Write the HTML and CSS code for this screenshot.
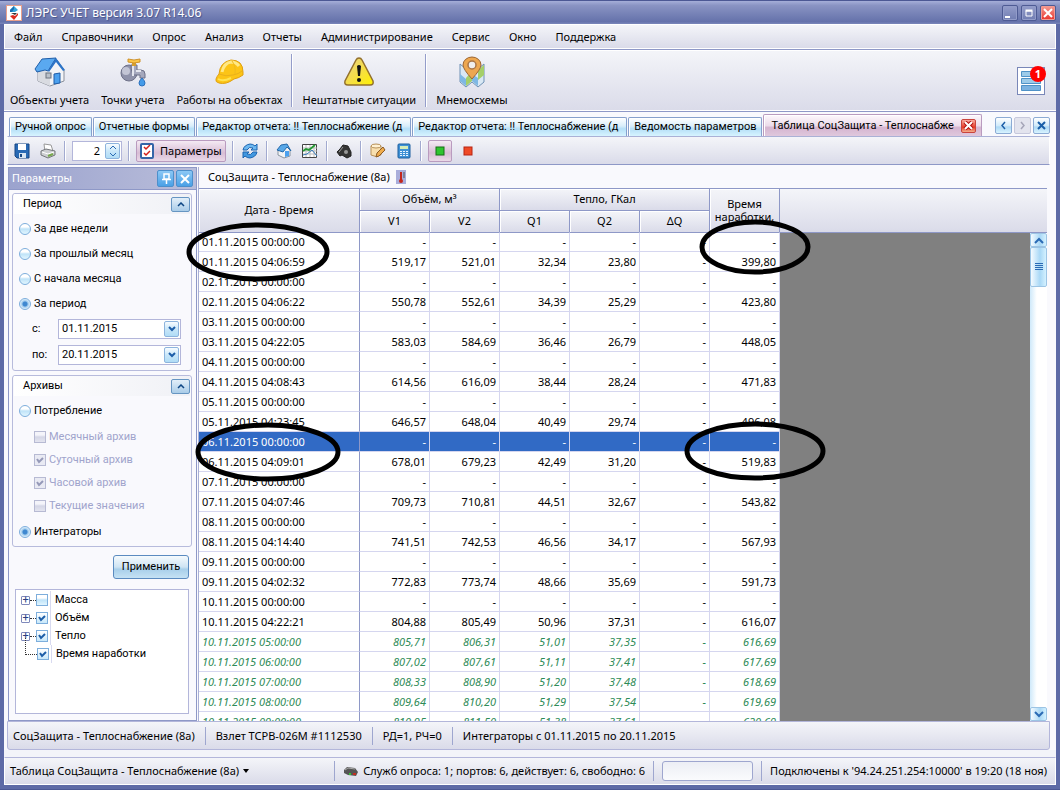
FILE: index.html
```html
<!DOCTYPE html>
<html lang="ru">
<head>
  <meta charset="utf-8">
  <title>ЛЭРС УЧЕТ</title>
  <link rel="stylesheet" href="styles.css">
</head>
<body>
<div class="window">

  <header class="titlebar">
    <svg class="app-icon" width="16" height="16" viewBox="0 0 16 16">
      <rect x="0.5" y="0.5" width="15" height="15" fill="#fff" stroke="#e8a08c"/>
      <path d="M8 1l4 4-3 2H4V5z" fill="#35a5dc"/>
      <path d="M8 1L4 5v2h2l2-3z" fill="#1b6fb0"/>
      <path d="M8 15l-4-4 3-1 2 1 3-3v2z" fill="#dd2a1c"/>
      <path d="M5 8h6l-2 2z" fill="#333"/>
    </svg>
    <h1>ЛЭРС УЧЕТ версия 3.07 R14.06</h1>
    <div class="window-buttons">
      <button class="win-btn" aria-label="Свернуть"><svg width="14" height="14"><path d="M2 11h5" stroke="#fff" stroke-width="2"/></svg></button>
      <button class="win-btn" aria-label="Развернуть"><svg width="14" height="14"><path d="M4 5h6v5H4z" fill="none" stroke="#fff"/><path d="M3.500 4.500h7" stroke="#fff" stroke-width="2"/></svg></button>
      <button class="win-btn win-close" aria-label="Закрыть"><svg width="14" height="14"><path d="M3 3l8 8M11 3l-8 8" stroke="#fff" stroke-width="2"/></svg></button>
    </div>
  </header>

  <nav class="menu">
    <a href="#">Файл</a>
    <a href="#">Справочники</a>
    <a href="#">Опрос</a>
    <a href="#">Анализ</a>
    <a href="#">Отчеты</a>
    <a href="#">Администрирование</a>
    <a href="#">Сервис</a>
    <a href="#">Окно</a>
    <a href="#">Поддержка</a>
  </nav>

  <div class="main-toolbar">
    <button class="big-btn">
      <svg width="32" height="32" viewBox="0 0 32 32">
        <path d="M4 14v11l12 5 14-5V14l-7-10-8 8z" fill="#f3f4f7" stroke="#8a8f9a"/>
        <path d="M4 14v11l12 5V16z" fill="#d9dbe1"/>
        <path d="M1 13L8 3l14-1-8 13-3-1-8 2z" fill="#5aa9f0" stroke="#1f5da8"/>
        <path d="M22 2l9 12-2 1-7-9-7 10-1-1z" fill="#2c74c8"/>
        <rect x="12" y="17" width="5" height="5" fill="#b9c0c9" stroke="#6d7480"/>
        <path d="M20 18l6-1v10l-6 1z" fill="#4ba0ee" stroke="#1f5da8"/>
      </svg>
      <span>Объекты учета</span>
    </button>
    <button class="big-btn">
      <svg width="32" height="32" viewBox="0 0 32 32">
        <circle cx="12" cy="17" r="8" fill="#8f92aa" stroke="#6d7088"/>
        <circle cx="9" cy="15" r="4" fill="#c3c5d5"/>
        <path d="M14 9h6v5h4q4 0 4 4v4h-5v-3h-6q-3-2-3-10z" fill="#a5a8bd" stroke="#6d7088"/>
        <path d="M16 10v10M19 15h5" stroke="#e4e5ee" stroke-width="2"/>
        <rect x="15" y="5" width="4" height="5" fill="#d59e2f"/>
        <path d="M11 3q6 2 12 0v3q-6 2-12 0z" fill="#fbc648" stroke="#cf922a"/>
        <path d="M25 22q3 3 3 5a3 3 0 0 1-6 0q0-2 3-5z" fill="#449be9" stroke="#2b70bd"/>
      </svg>
      <span>Точки учета</span>
    </button>
    <button class="big-btn">
      <svg width="32" height="32" viewBox="0 0 32 32">
        <path d="M2 23q1-3 3-5Q6 6 17 4q12 0 12 12v3q-4 3-9 4-8 6-15 4-4-1-3-4z" fill="#fcc416" stroke="#e0a012"/>
        <path d="M8 16Q10 7 17 6q5 0 8 4" fill="none" stroke="#ffe886" stroke-width="3"/>
        <path d="M5 18q7 3 14 1 6-1 9-4" fill="none" stroke="#eab01a"/>
        <path d="M4 23q5 3 13-1" fill="none" stroke="#ffe352" stroke-width="2"/>
        <path d="M18 5q4 5 3 13" fill="none" stroke="#f0ba1c"/>
      </svg>
      <span>Работы на объектах</span>
    </button>
    <span class="big-sep"></span>
    <button class="big-btn">
      <svg width="32" height="32" viewBox="0 0 32 32">
        <defs><linearGradient id="warn" x1="0" y1="0" x2="1" y2="1"><stop offset="0" stop-color="#e8d38b"/><stop offset="0.500" stop-color="#f5dd4a"/><stop offset="1" stop-color="#fff200"/></linearGradient></defs>
        <path d="M16 2q2 0 3 2l11 21q1 4-3 4H5q-4 0-3-4L13 4q1-2 3-2z" fill="url(#warn)" stroke="#93702c" stroke-width="1.500"/>
        <path d="M14 10q2-2 4 0l-1 10h-2z" fill="#111"/>
        <circle cx="16" cy="24" r="2" fill="#111"/>
      </svg>
      <span>Нештатные ситуации</span>
    </button>
    <span class="big-sep"></span>
    <button class="big-btn">
      <svg width="32" height="32" viewBox="0 0 32 32">
        <path d="M4 8l6 5 6-5 6 5 6-5v18l-6 5-6-5-6 5-6-5z" fill="#d9e8f4" stroke="#6e91b5"/>
        <path d="M4 18l6 5v7l-6-5zM16 18l6 4v8l-6-5z" fill="#7eb8e4"/>
        <path d="M10 22l6-7v10l-6 5zM22 14l6-5v10l-6 5z" fill="#a5cf69"/>
        <path d="M16 23Q7 13 7 9a9 8 0 0 1 18 0q0 4-9 14z" fill="#eda750" stroke="#9c6633"/>
        <circle cx="16" cy="9" r="4" fill="#f0eeec" stroke="#aa7545" stroke-width="1.500"/>
      </svg>
      <span>Мнемосхемы</span>
    </button>
    <button class="notify" aria-label="Уведомления">
      <svg width="20" height="20"><g fill="#9ccbe9" stroke="#4f92c7"><path d="M.5.500h19v5H.500z"/><path d="M.5 7.500h19v5H.500z"/><path d="M.5 14.500h19v5H.500z" fill="#7bb2e0"/></g></svg>
      <span class="badge">1</span>
    </button>
  </div>

  <div class="tabs">
    <button class="tab">Ручной опрос</button>
    <button class="tab">Отчетные формы</button>
    <button class="tab tab-long">Редактор отчета: !! Теплоснабжение (д</button>
    <button class="tab tab-long">Редактор отчета: !! Теплоснабжение (д</button>
    <button class="tab">Ведомость параметров</button>
    <div class="tab tab-active">
      <span>Таблица СоцЗащита - Теплоснабже</span>
      <button class="tab-close" aria-label="Закрыть вкладку"><svg width="11" height="9"><path d="M2 1l7 7M9 1L2 8" stroke="#b01010" stroke-width="4"/><path d="M2 1l7 7M9 1L2 8" stroke="#fff" stroke-width="2"/></svg></button>
    </div>
    <div class="tab-nav">
      <button class="nav-btn" aria-label="Назад"><svg width="9" height="9"><path d="M6 1L3 4.500 6 8" fill="none" stroke="#1a5ea8" stroke-width="1.500"/></svg></button>
      <button class="nav-btn" disabled aria-label="Вперед"><svg width="9" height="9"><path d="M3 1l3 3.500L3 8" fill="none" stroke="#a5a5b8" stroke-width="1.500"/></svg></button>
      <button class="nav-btn" aria-label="Закрыть"><svg width="9" height="9"><path d="M1 1l7 7M8 1L1 8" stroke="#1a5ea8" stroke-width="2"/></svg></button>
    </div>
  </div>

  <main class="page">
    <div class="tools">
      <button class="tool" aria-label="Сохранить"><svg width="16" height="16"><path d="M1 1h14v14H3l-2-2z" fill="#2869b4" stroke="#174784"/><path d="M4 1h8v6H4z" fill="#fff"/><path d="M5 10h7v5H5z" fill="#d8e5f2"/><path d="M6 11h2v3H6z" fill="#174784"/></svg></button>
      <button class="tool" aria-label="Печать"><svg width="16" height="16"><path d="M4 1l7 1 2 6-8 1z" fill="#fff" stroke="#999"/><path d="M1 8l5-2 9 2v4l-7 3-7-3z" fill="#ccced1" stroke="#74767b"/><path d="M2 9l6 2 6-2" fill="none" stroke="#fff"/><path d="M8 13l5-2" stroke="#77a84b" stroke-width="2"/></svg></button>
      <span class="sep"></span>
      <div class="spin">
        <input type="text" value="2" aria-label="Знаков после запятой">
        <button class="spin-btn" aria-label="Изменить"><svg width="8" height="12"><path d="M1 4l3-3 3 3M1 8l3 3 3-3" fill="none" stroke="#2a6cb4"/></svg></button>
      </div>
      <span class="sep"></span>
      <button class="tool tool-on tool-text"><svg width="14" height="16"><rect x="1" y="1" width="12" height="14" rx="1" fill="#fff" stroke="#3465a8" stroke-width="2"/><path d="M4 4l2 2 4-4M4 10l2 2 4-4" fill="none" stroke="#d3201b" stroke-width="1.500"/></svg><span>Параметры</span></button>
      <span class="sep"></span>
      <button class="tool" aria-label="Обновить"><svg width="16" height="16"><path d="M1 7q1-5 7-6 3 0 5 2l2-2v6H9l2-2Q7 3 5 7z" fill="#6cb8f0" stroke="#1c64b0"/><path d="M15 9q-1 5-7 6-3 0-5-2l-2 2V9h6l-2 2q4 2 6-2z" fill="#4298e0" stroke="#1c64b0"/></svg></button>
      <span class="sep"></span>
      <button class="tool" aria-label="Объект"><svg width="16" height="16"><path d="M2 7v5l6 3 6-2V7l-4-4z" fill="#f2f3f5" stroke="#8893a0"/><path d="M1 7l4-5 6-1 4 7-4-4-4 5z" fill="#58a8e8" stroke="#2569aa"/><path d="M9 8h4v5l-4 1z" fill="#4ba0ee"/></svg></button>
      <button class="tool" aria-label="График"><svg width="16" height="16"><path d="M.5 1.500h14v13H.500z" fill="#fff" stroke="#444"/><path d="M1 5h14M1 8h14M1 11h14M4 2v12M8 2v12M12 2v12" stroke="#bbb"/><path d="M1 8l3-2 3 1 6-5" fill="none" stroke="#259a35" stroke-width="2"/><path d="M1 12l4-1 5-4 5 6" fill="none" stroke="#3478b9"/></svg></button>
      <span class="sep"></span>
      <button class="tool" aria-label="Устройство"><svg width="16" height="16"><path d="M1 9l3-3 3-4 5 1 3 6v4l-4 2-5-3-2 1z" fill="#353535" stroke="#222"/><circle cx="10" cy="9" r="2" fill="#999"/><path d="M3 9l4-5" stroke="#999"/></svg></button>
      <span class="sep"></span>
      <button class="tool" aria-label="Правка"><svg width="16" height="16"><path d="M1 3q5-3 10 0v9q-5 3-10 0z" fill="#f8dfae" stroke="#b8925b"/><ellipse cx="6" cy="3" rx="5" ry="2" fill="#fff1d2" stroke="#b8925b"/><path d="M6 14l1-4 6-6 2 3-6 6z" fill="#efac4d" stroke="#8a5a26"/></svg></button>
      <button class="tool" aria-label="Калькулятор"><svg width="16" height="16"><rect x="2" y="1" width="12" height="14" rx="1" fill="#3f91d5" stroke="#1c5f9f"/><path d="M4 3h8v3H4z" fill="#d4ecb8"/><path d="M4 8.500h8M4 10.500h8M4 12.500h8" stroke="#eaf5ff" stroke-dasharray="2 1"/></svg></button>
      <span class="sep"></span>
      <button class="tool tool-on" aria-label="Зеленый"><svg width="16" height="16"><rect x="4" y="4" width="8" height="8" fill="#2fc42f" stroke="#176f17"/></svg></button>
      <button class="tool" aria-label="Красный"><svg width="16" height="16"><rect x="4" y="4" width="8" height="8" fill="#ef4a27" stroke="#b82512"/></svg></button>
    </div>

    <div class="work">
      <aside class="params">
        <div class="params-head">
          <h2>Параметры</h2>
          <button class="head-btn" aria-label="Закрепить"><svg width="10" height="12"><path d="M3 1h5v5H3zM1 6.500h9M5.500 7v4" fill="none" stroke="#fff" stroke-width="1.500"/></svg></button>
          <button class="head-btn" aria-label="Закрыть панель"><svg width="10" height="10"><path d="M1 1l8 8M9 1L1 9" stroke="#fff" stroke-width="2"/></svg></button>
        </div>

        <section class="group">
          <div class="group-head"><h3>Период</h3><button class="fold" aria-label="Свернуть период"><svg width="8" height="5"><path d="M1 4l3-3 3 3" fill="none" stroke="#0d4684" stroke-width="1.500"/></svg></button></div>
          <label class="radio"><input type="radio" name="period">За две недели</label>
          <label class="radio"><input type="radio" name="period">За прошлый месяц</label>
          <label class="radio"><input type="radio" name="period">С начала месяца</label>
          <label class="radio"><input type="radio" name="period" checked>За период</label>
          <div class="date">
            <label for="dateFrom">с:</label>
            <div class="date-box"><input type="text" id="dateFrom" value="01.11.2015"><button class="drop" aria-label="Выбрать начало"><svg width="8" height="6"><path d="M1 1l3 3 3-3" fill="none" stroke="#1d5ea8" stroke-width="2"/></svg></button></div>
          </div>
          <div class="date">
            <label for="dateTo">по:</label>
            <div class="date-box"><input type="text" id="dateTo" value="20.11.2015"><button class="drop" aria-label="Выбрать конец"><svg width="8" height="6"><path d="M1 1l3 3 3-3" fill="none" stroke="#1d5ea8" stroke-width="2"/></svg></button></div>
          </div>
        </section>

        <section class="group">
          <div class="group-head"><h3>Архивы</h3><button class="fold" aria-label="Свернуть архивы"><svg width="8" height="5"><path d="M1 4l3-3 3 3" fill="none" stroke="#0d4684" stroke-width="1.500"/></svg></button></div>
          <label class="radio"><input type="radio" name="source">Потребление</label>
          <div class="checks">
            <label class="check"><input type="checkbox" disabled>Месячный архив</label>
            <label class="check"><input type="checkbox" disabled checked>Суточный архив</label>
            <label class="check"><input type="checkbox" disabled checked>Часовой архив</label>
            <label class="check"><input type="checkbox" disabled>Текущие значения</label>
          </div>
          <label class="radio"><input type="radio" name="source" checked>Интеграторы</label>
        </section>

        <button class="apply">Применить</button>

        <ul class="tree">
          <li><button class="plus" aria-label="Раскрыть">+</button><label><input type="checkbox"><span>Масса</span></label></li>
          <li><button class="plus" aria-label="Раскрыть">+</button><label><input type="checkbox" checked><span>Объём</span></label></li>
          <li><button class="plus" aria-label="Раскрыть">+</button><label><input type="checkbox" checked><span>Тепло</span></label></li>
          <li class="leaf"><label><input type="checkbox" checked><span>Время наработки</span></label></li>
        </ul>
      </aside>

      <section class="data">
        <div class="caption">
          <h2>СоцЗащита - Теплоснабжение (8а)</h2>
          <svg width="10" height="14"><rect width="10" height="14" fill="#a9addb"/><path d="M5 2v8" stroke="#c3261d" stroke-width="2"/><circle cx="5" cy="11" r="2" fill="#c3261d"/><path d="M7 3h2M7 5h2M7 7h2" stroke="#555"/></svg>
        </div>
        <div class="grid">
          <table>
            <colgroup><col class="col-date"><col span="6" class="col-num"></colgroup>
            <thead>
              <tr><th rowspan="2">Дата - Время</th><th colspan="2">Объём, м³</th><th colspan="3">Тепло, ГКал</th><th rowspan="2">Время наработки,</th></tr>
              <tr><th>V1</th><th>V2</th><th>Q1</th><th>Q2</th><th>ΔQ</th></tr>
            </thead>
            <tbody id="rows"></tbody>
          </table>
          <div class="rest">
            <div class="rest-head"></div>
            <div class="rest-body">
              <div class="scroll">
                <button class="scroll-btn" aria-label="Вверх"><svg width="10" height="7"><path d="M1 6l4-4 4 4" fill="none" stroke="#2b6bb5" stroke-width="2"/></svg></button>
                <div class="thumb"><svg width="8" height="8"><path d="M0 .5h8M0 2.500h8M0 4.500h8M0 6.500h8" stroke="#2b6bb5"/></svg></div>
                <button class="scroll-btn scroll-down" aria-label="Вниз"><svg width="10" height="7"><path d="M1 1l4 4 4-4" fill="none" stroke="#2b6bb5" stroke-width="2"/></svg></button>
              </div>
            </div>
          </div>
        </div>
        <svg class="marks" width="660" height="340" viewBox="0 0 660 340">
          <ellipse cx="77" cy="85" rx="69" ry="27"/>
          <ellipse cx="574" cy="80" rx="53" ry="25"/>
          <ellipse cx="87" cy="285" rx="70" ry="27"/>
          <ellipse cx="574" cy="284" rx="68" ry="27"/>
        </svg>
      </section>
    </div>

    <div class="info">
      <span>СоцЗащита - Теплоснабжение (8а)</span>
      <span>Взлет ТСРВ-026М #1112530</span>
      <span>РД=1, РЧ=0</span>
      <span>Интеграторы с 01.11.2015 по 20.11.2015</span>
    </div>
  </main>

  <footer class="status">
    <button class="status-menu">Таблица СоцЗащита - Теплоснабжение (8а) <svg width="6" height="4"><path d="M0 0h6L3 4z"/></svg></button>
    <span class="status-item"><svg width="16" height="12"><path d="M1 5l3-3 8 1 3 4-2 4-8-1-4-2z" fill="#555"/><path d="M2 5l3-2 7 1" fill="none" stroke="#aaa"/><path d="M6 9h2" stroke="#35c435" stroke-width="2"/><path d="M10 9h3" stroke="#c03020" stroke-width="2"/></svg>Служб опроса: 1; портов: 6, действует: 6, свободно: 6</span>
    <span class="status-item"><span class="progress"></span></span>
    <span class="status-item">Подключены к '94.24.251.254:10000' в 19:20 (18 ноя)</span>
  </footer>

</div>
<script src="script.js"></script>
</body>
</html>
```

FILE: styles.css
```css
* {
  box-sizing: border-box;
}

body {
  margin: 0;
  font: 11px/16px "Noto Sans", "Open Sans", sans-serif;
  color: #000;
}

button,
input {
  margin: 0;
  padding: 0;
  font: inherit;
  color: inherit;
}

button {
  display: flex;
  align-items: center;
  justify-content: center;
  border: none;
  background: none;
}

svg {
  display: block;
  flex: none;
}

h1, h2, h3 {
  margin: 0;
  font-size: 11px;
  font-weight: normal;
}

.window {
  display: flex;
  flex-direction: column;
  height: 100vh;
  padding: 0 4px 4px;
  background: #5d6aa6;
  border: 1px solid #4c5894;
  border-width: 1px 0;
  overflow: hidden;
}

/* title */
.titlebar {
  display: flex;
  flex: none;
  align-items: center;
  gap: 4px;
  height: 23px;
  margin: 0 -4px;
  padding: 0 4px 0 6px;
  background: linear-gradient(#a5aed8, #8993c3 20%, #6572ab 90%, #7b87ba);
}

.titlebar h1 {
  flex: 1;
  font-size: 12px;
  color: #fff;
  text-shadow: 1px 1px 1px #46528a;
}

.window-buttons {
  display: flex;
  gap: 3px;
}

.win-btn {
  width: 16px;
  height: 16px;
  border: 1px solid #4e5b94;
  border-radius: 2px;
  background: linear-gradient(#949dca, #717db2);
  box-shadow: inset 0 0 0 1px #929cc9;
}

.win-close {
  background: linear-gradient(#f49c93, #e8332c);
  box-shadow: inset 0 0 0 1px #f19a92;
}

/* menu and main toolbar */
.menu,
.main-toolbar,
.tools,
.info,
.status {
  flex: none;
  display: flex;
  background: linear-gradient(#f4f5f9, #dadbe9);
  border: 1px solid #fff;
}

.menu {
  align-items: center;
  gap: 19px;
  height: 25px;
  padding: 0 9px;
}

.menu a {
  color: #000;
  text-decoration: none;
}

.main-toolbar {
  height: 63px;
  padding: 2px 4px 2px 0;
  border-width: 1px 0;
  border-color: #8e98c7;
  box-shadow: inset 0 1px #fff, inset 0 -1px #fff;
}

.big-btn {
  flex-direction: column;
  justify-content: flex-start;
  gap: 4px;
  padding: 4px 6px 0;
  white-space: nowrap;
}

.big-sep {
  width: 2px;
  margin: 2px 3px;
  background: linear-gradient(90deg, #949dca 50%, #fff 50%);
}

.notify {
  position: relative;
  align-self: center;
  width: 28px;
  height: 28px;
  margin: 0 7px 0 auto;
  border: 1px solid #7987b8;
  background: #fff;
}

.badge {
  position: absolute;
  top: -2px;
  right: -2px;
  width: 16px;
  height: 16px;
  border-radius: 50%;
  background: #f00;
  color: #fff;
  font-weight: bold;
}

/* tabs */
.tabs {
  display: flex;
  flex: none;
  align-items: flex-end;
  gap: 1px;
  height: 24px;
  padding: 0 10px 0 5px;
  background: #f9f9fd;
}

.tab {
  flex: none;
  height: 19px;
  padding: 0 5px;
  border: 1px solid #86a0cc;
  border-bottom: none;
  border-radius: 2px 2px 0 0;
  background: linear-gradient(#fff, #d9eefa 45%, #b5dff7 60%, #d7f4ff);
  box-shadow: inset 1px 1px #fff;
  font-family: Roboto, sans-serif;
  white-space: nowrap;
  overflow: hidden;
}

.tab-long {
  justify-content: flex-start;
  width: 215px;
}

.tab-active {
  display: flex;
  align-items: center;
  justify-content: space-between;
  width: 219px;
  height: 22px;
  padding: 0 5px 0 7px;
  border-color: #b99bbf;
  background: linear-gradient(#fdf8fc, #ecdcea 50%, #d5b5d0 60%, #dfc8dd);
}

.tab-close {
  width: 15px;
  height: 14px;
  border: 1px solid #c9443d;
  border-radius: 2px;
  background: linear-gradient(#f8aaa0, #e83b26 60%, #f2b08e);
}

.tab-nav {
  display: flex;
  gap: 2px;
  margin: 0 -4px 2px auto;
}

.nav-btn {
  width: 17px;
  height: 17px;
  border: 1px solid #8cabd4;
  border-radius: 2px;
  background: linear-gradient(#fff, #d3ebfa 50%, #aed9f5 60%, #d9f4ff);
}

.nav-btn:disabled {
  border-color: #c6c8dc;
  background: #e3e4ee;
}

/* page */
.page {
  display: flex;
  flex: 1;
  flex-direction: column;
  min-height: 0;
  padding: 0 6px 0 3px;
  background: #f9f9fd;
}

.tools {
  align-items: center;
  gap: 6px;
  height: 29px;
  padding: 0 4px;
  border-top: 1px solid #aab1d6;
  border-bottom: 1px solid #8e98c7;
}

.tool {
  min-width: 20px;
  height: 22px;
  border: 1px solid transparent;
  border-radius: 2px;
}

.tool-on {
  min-width: 24px;
  border-color: #b99bbf;
  background: linear-gradient(#f4eaf3, #d8bdd5 60%, #ead9e8);
}

.tool-text {
  gap: 6px;
  padding: 0 3px;
}

.sep {
  width: 2px;
  height: 20px;
  background: linear-gradient(90deg, #a2aad0 50%, #fff 50%);
}

.spin {
  display: flex;
  align-items: center;
  width: 50px;
  height: 20px;
  padding-right: 1px;
  border: 1px solid #b3b6da;
  background: #fff;
}

.spin input {
  flex: 1;
  min-width: 0;
  padding-right: 5px;
  border: none;
  background: none;
  text-align: right;
}

.spin-btn,
.drop {
  flex: none;
  width: 15px;
  height: 16px;
  border: 1px solid #8db4dd;
  border-radius: 2px;
  background: linear-gradient(#f8fcff, #c9e7f9 50%, #b0dcf6);
}

.work {
  display: flex;
  flex: 1;
  gap: 1px;
  min-height: 0;
  padding: 2px 3px 0 1px;
}

/* parameters */
.params {
  flex: none;
  width: 189px;
  border: 1px solid #8e98c7;
  background: #f9f9fd;
  font-family: Roboto, sans-serif;
}

.params-head {
  display: flex;
  align-items: center;
  gap: 2px;
  height: 22px;
  padding: 0 3px;
  border-bottom: 1px solid #8e98c7;
  background: linear-gradient(90deg, #9ba3ce, #b9bdda);
}

.params-head h2 {
  flex: 1;
  color: #fff;
}

.head-btn {
  width: 17px;
  height: 17px;
  border: 1px solid #4d8fcb;
  border-radius: 2px;
  background: linear-gradient(#8cc8f5, #4aa0e6);
}

.group {
  margin: 3px 4px 4px 3px;
  padding: 0 1px 2px;
  border: 1px solid #b7bbdc;
  border-radius: 3px;
}

.group-head {
  display: flex;
  align-items: center;
  justify-content: space-between;
  height: 20px;
  margin-bottom: 2px;
  padding-left: 9px;
  background: linear-gradient(90deg, #fff, #f0f1f6);
}

.fold {
  width: 19px;
  height: 15px;
  border: 1px solid #6695c2;
  border-radius: 2px;
  background: linear-gradient(#e3eff9, #a9cce8);
}

.radio,
.check {
  display: flex;
  align-items: center;
  gap: 3px;
  height: 25px;
  padding-left: 5px;
}

.checks {
  padding: 2px 0 2px 15px;
}

.check {
  height: 23px;
  color: #a0a4cc;
}

input[type="radio"],
input[type="checkbox"] {
  flex: none;
  appearance: none;
  width: 12px;
  height: 12px;
  border: 1px solid #7daedc;
  background: linear-gradient(#fff 30%, #bfe3f8 50%, #e2f6ff);
}

input[type="radio"] {
  border-radius: 50%;
}

input[type="radio"]:checked {
  background: radial-gradient(circle, #3f88d0 2px, #9cc8ec 3px, #e3f3fd 5px);
}

input[type="checkbox"]:checked {
  background: url("data:image/svg+xml,%3Csvg xmlns='http://www.w3.org/2000/svg' width='10' height='10'%3E%3Cpath d='M2 4l2 3 4-4' fill='none' stroke='%231d5ea8' stroke-width='2'/%3E%3C/svg%3E") center no-repeat, linear-gradient(#fff, #c8e8fa);
}

input[type="checkbox"]:disabled {
  border-color: #b7bad3;
  background: linear-gradient(#f4f4fa 30%, #d4d6e6 50%, #e4e5f0);
}

input[type="checkbox"]:disabled:checked {
  background: url("data:image/svg+xml,%3Csvg xmlns='http://www.w3.org/2000/svg' width='10' height='10'%3E%3Cpath d='M2 4l2 3 4-4' fill='none' stroke='%239599b8' stroke-width='2'/%3E%3C/svg%3E") center no-repeat, #e9eaf3;
}

.date {
  display: flex;
  align-items: center;
  height: 26px;
  padding: 0 9px 0 18px;
}

.date > label {
  flex: none;
  width: 26px;
}

.date-box {
  display: flex;
  flex: 1;
  align-items: center;
  min-width: 0;
  height: 20px;
  padding-right: 1px;
  border: 1px solid #b3b6da;
  background: #fff;
}

.date-box input {
  flex: 1;
  min-width: 0;
  padding-left: 3px;
  border: none;
  background: none;
}

.apply {
  width: 76px;
  height: 24px;
  margin: 8px 7px 10px auto;
  border: 1px solid #5b8bc0;
  border-radius: 3px;
  background: linear-gradient(#f5fafd, #cfe4f3 50%, #a8cfea 60%, #c5e2f4);
}

.tree {
  height: 125px;
  margin: 0 7px 0 6px;
  padding: 1px 5px;
  border: 1px solid #b3b6da;
  background: #fff;
  list-style: none;
}

.tree li {
  display: flex;
  align-items: center;
  height: 18px;
}

.tree li::before {
  content: "";
  order: 1;
  width: 6px;
  border-top: 1px dotted #333;
}

.tree label {
  display: flex;
  order: 2;
  align-items: center;
  gap: 2px;
}

.tree label span {
  padding: 1px 4px;
  border-left: 1px solid #d8daf0;
}

.tree .leaf {
  padding-left: 4px;
}

.tree .leaf::before {
  order: 0;
  width: 11px;
  height: 16px;
  margin-bottom: 16px;
  border: dotted #333;
  border-width: 0 0 1px 1px;
}

.plus {
  width: 9px;
  height: 9px;
  border: 1px solid #7f89bb;
  border-radius: 1px;
  color: #2b3f83;
  line-height: 8px;
}

/* data table */
.data {
  position: relative;
  display: flex;
  flex: 1;
  flex-direction: column;
  min-width: 0;
  border-left: 1px solid #a9afd5;
}

.caption {
  display: flex;
  flex: none;
  align-items: center;
  gap: 6px;
  height: 21px;
  padding: 0 9px 2px;
}

.grid {
  display: flex;
  flex: 1;
  min-height: 0;
  overflow: hidden;
}

table {
  flex: none;
  width: 581px;
  height: max-content;
  border-spacing: 0;
  table-layout: fixed;
}

.col-date {
  width: 161px;
}

.col-num {
  width: 70px;
}

th {
  height: 22px;
  padding: 0 2px 2px;
  border: solid #8e98c7;
  border-width: 1px 1px 0 0;
  background: linear-gradient(#f4f5f9, #dadbe9);
  box-shadow: inset 1px 1px #fff;
  font-weight: normal;
  line-height: 13px;
}

td {
  height: 20px;
  padding: 0 3px;
  border: solid #d5d6ef;
  border-width: 0 1px 1px 0;
  background: #fff;
  line-height: 16px;
  text-align: right;
}

tbody tr:first-child td {
  border-top: 1px solid #8e98c7;
}

td:first-child {
  border-right-color: #8e98c7;
  text-align: left;
}

.selected td {
  background: #316ac5;
  color: #fff;
}

.hourly td {
  color: #2e8b57;
  font-style: italic;
}

.rest {
  display: flex;
  flex: 1;
  flex-direction: column;
}

.rest-head {
  height: 45px;
  border: solid #8e98c7;
  border-width: 1px 0;
  background: linear-gradient(#f4f5f9, #dadbe9);
}

.rest-body {
  display: flex;
  flex: 1;
  justify-content: flex-end;
  background: #808080;
}

.scroll {
  display: flex;
  flex-direction: column;
  width: 17px;
  background: linear-gradient(90deg, #cfe9fa, #fff 40%);
}

.scroll-btn,
.thumb {
  height: 14px;
  border: 1px solid #9cc4e4;
  border-radius: 2px;
  background: linear-gradient(90deg, #f5fbff, #a9d8f6 60%, #d4f1ff);
}

.thumb {
  display: flex;
  align-items: center;
  justify-content: center;
  height: 40px;
}

.scroll-down {
  margin-top: auto;
}

.marks {
  position: absolute;
  top: 0;
  left: -18px;
  fill: none;
  stroke: #000;
  stroke-width: 5;
  pointer-events: none;
}

/* bottom bars */
.info {
  align-items: center;
  height: 29px;
  border-color: #b3b6da;
  border-radius: 0 0 3px 3px;
}

.info span {
  padding: 1px 10px;
}

.info span:first-child {
  padding-left: 5px;
}

.info span + span {
  border-left: 1px solid #9ea6cf;
}

.status {
  align-items: center;
  height: 28px;
  border-top: 1px solid #b3b6da;
  box-shadow: 0 -7px #f3f4f9;
  margin-top: 7px;
}

.status-menu {
  gap: 4px;
  margin-right: auto;
  padding: 0 5px;
}

.status-item {
  display: flex;
  align-items: center;
  gap: 4px;
  height: 20px;
  padding: 0 8px;
  border-left: 1px solid #9ea6cf;
  white-space: nowrap;
}

.progress {
  width: 91px;
  height: 20px;
  border: 1px solid #9ea6cf;
  border-radius: 3px;
  background: linear-gradient(#eceef5, #fafbfd);
}
```

FILE: script.js
```js
// date, V1, V2, Q1, Q2, hours
const readings = [
  ["01.11.2015 04:06:59", "519,17", "521,01", "32,34", "23,80", "399,80"],
  ["02.11.2015 04:06:22", "550,78", "552,61", "34,39", "25,29", "423,80"],
  ["03.11.2015 04:22:05", "583,03", "584,69", "36,46", "26,79", "448,05"],
  ["04.11.2015 04:08:43", "614,56", "616,09", "38,44", "28,24", "471,83"],
  ["05.11.2015 04:23:45", "646,57", "648,04", "40,49", "29,74", "496,08"],
  ["06.11.2015 04:09:01", "678,01", "679,23", "42,49", "31,20", "519,83"],
  ["07.11.2015 04:07:46", "709,73", "710,81", "44,51", "32,67", "543,82"],
  ["08.11.2015 04:14:40", "741,51", "742,53", "46,56", "34,17", "567,93"],
  ["09.11.2015 04:02:32", "772,83", "773,74", "48,66", "35,69", "591,73"],
  ["10.11.2015 04:22:21", "804,88", "805,49", "50,96", "37,31", "616,07"]
];

const hourly = [
  ["10.11.2015 05:00:00", "805,71", "806,31", "51,01", "37,35", "616,69"],
  ["10.11.2015 06:00:00", "807,02", "807,61", "51,11", "37,41", "617,69"],
  ["10.11.2015 07:00:00", "808,33", "808,90", "51,20", "37,48", "618,69"],
  ["10.11.2015 08:00:00", "809,64", "810,20", "51,29", "37,54", "619,69"],
  ["10.11.2015 09:00:00", "810,95", "811,50", "51,38", "37,61", "620,69"]
];

const body = document.getElementById("rows");

function addRow(row, className) {
  const tr = body.insertRow();
  tr.className = className;
  const cells = [row[0], row[1], row[2], row[3], row[4], "-", row[5]];
  cells.forEach(text => {
    tr.insertCell().textContent = text;
  });
}

readings.forEach(row => {
  const day = row[0].slice(0, 10);
  // every day starts with an empty midnight record
  addRow([day + " 00:00:00", "-", "-", "-", "-", "-"], day.startsWith("06") ? "selected" : "");
  addRow(row, "");
});

hourly.forEach(row => addRow(row, "hourly"));
```
